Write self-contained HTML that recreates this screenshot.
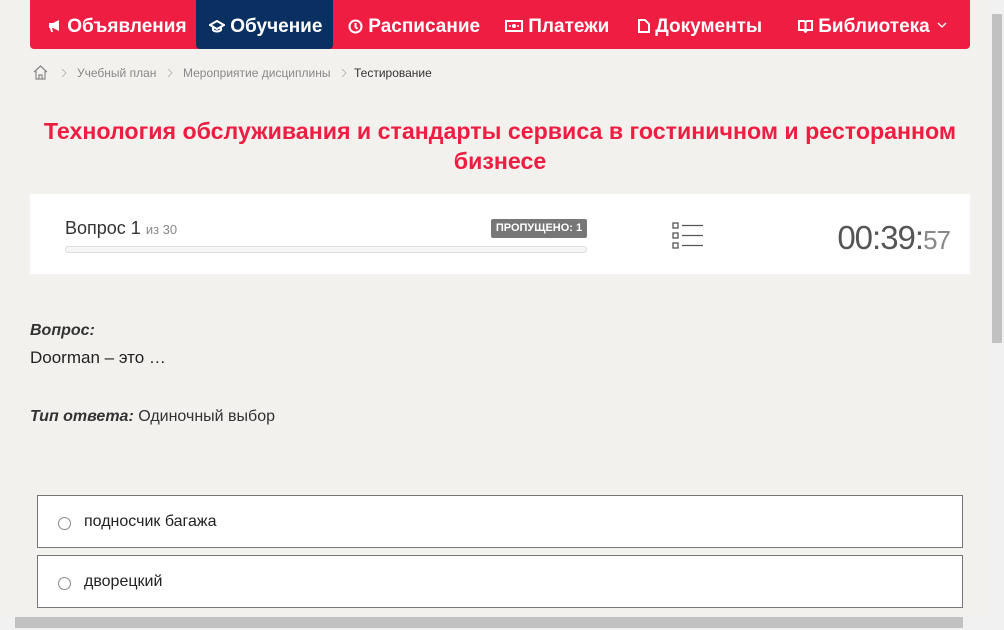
<!DOCTYPE html>
<html><head><meta charset="utf-8"><style>
*{box-sizing:border-box;margin:0;padding:0}
body{width:1004px;height:630px;overflow:hidden;background:#f2f1ee;font-family:"Liberation Sans","DejaVu Sans",sans-serif;position:relative;color:#222}
.nav{position:absolute;left:30px;top:0;width:940px;height:49px;background:#ee1d41;border-radius:0 0 4px 4px}
.it{position:absolute;top:0;height:49px;line-height:53px;color:#fff;font-size:19px;font-weight:bold;font-family:"Liberation Sans",sans-serif;white-space:nowrap}
.act{background:#0a3061;border-radius:0 0 4px 4px}
.bc{position:absolute;top:66px;font-size:12px;color:#888}
h1{position:absolute;left:18px;width:964px;top:116px;text-align:center;color:#ee1d41;font-size:23.2px;line-height:30px;font-weight:bold;font-family:"Liberation Sans",sans-serif}
.card{position:absolute;left:30px;top:194px;width:940px;height:80px;background:#fff}
.opt{position:absolute;left:37px;width:926px;height:53px;background:#fff;border:1px solid #777}
.opt span{position:absolute;left:46px;top:17px;font-size:16px;color:#222}
.opt i{position:absolute;left:20px;top:21px;width:13px;height:13px;border:1px solid #888;border-radius:50%}
</style></head><body>
<div class="nav">
<div class="it" style="left:18px">
<svg width="14" height="14" viewBox="0 0 14 14" style="vertical-align:-1px"><path d="M1 4h4l6-3v11l-6-3H4l1 4H3l-1-4H1z" fill="#fff"/></svg> Объявления</div>
<div class="it act" style="left:166px;width:137px;padding-left:13px">
<svg width="16" height="14" viewBox="0 0 16 14" style="vertical-align:-1px"><path d="M8 2L1 6l7 4 7-4z M4 8v3c2 2 6 2 8 0V8" fill="none" stroke="#fff" stroke-width="2"/></svg> Обучение</div>
<div class="it" style="left:318px">
<svg width="15" height="15" viewBox="0 0 15 15" style="vertical-align:-2px"><circle cx="7.5" cy="7.5" r="6" fill="none" stroke="#fff" stroke-width="2"/><path d="M7.5 4v4l2 2" fill="none" stroke="#fff" stroke-width="2"/></svg> Расписание</div>
<div class="it" style="left:475px">
<svg width="18" height="12" viewBox="0 0 18 12" style="vertical-align:0"><rect x="1" y="1" width="16" height="10" fill="none" stroke="#fff" stroke-width="2"/><circle cx="9" cy="6" r="2" fill="#fff"/><circle cx="5" cy="6" r="1" fill="#fff"/><circle cx="13" cy="6" r="1" fill="#fff"/></svg> Платежи</div>
<div class="it" style="left:608px">
<svg width="12" height="14" viewBox="0 0 12 14" style="vertical-align:-1px"><path d="M1 1h6l4 4v8H1z" fill="none" stroke="#fff" stroke-width="2"/></svg> Документы</div>
<div class="it" style="left:768px">
<svg width="15" height="13" viewBox="0 0 15 13" style="vertical-align:-1px"><path d="M1 1h5l1.5 1L9 1h5v9H9l-1.5 2L6 10H1z M7.5 2v10" fill="none" stroke="#fff" stroke-width="2"/></svg> Библиотека</div>
<svg style="position:absolute;left:907px;top:22px" width="10" height="7" viewBox="0 0 10 7"><path d="M1 1l4 4 4-4" fill="none" stroke="#fff" stroke-width="1.3"/></svg>
</div>
<svg style="position:absolute;left:33px;top:65px" width="15" height="15" viewBox="0 0 15 15"><path d="M1 7L7.5 1 14 7M3 6v8h9V6M6 14V10h3v4" fill="none" stroke="#888" stroke-width="1.2"/></svg>
<svg style="position:absolute;left:61px;top:68px" width="6" height="10" viewBox="0 0 6 10"><path d="M1 1l4 4-4 4" fill="none" stroke="#bbb"/></svg>
<div class="bc" style="left:77px">Учебный план</div>
<svg style="position:absolute;left:167px;top:68px" width="6" height="10" viewBox="0 0 6 10"><path d="M1 1l4 4-4 4" fill="none" stroke="#bbb"/></svg>
<div class="bc" style="left:183px">Мероприятие дисциплины</div>
<svg style="position:absolute;left:341px;top:68px" width="6" height="10" viewBox="0 0 6 10"><path d="M1 1l4 4-4 4" fill="none" stroke="#bbb"/></svg>
<div class="bc" style="left:354px;color:#333">Тестирование</div>
<h1>Технология обслуживания и стандарты сервиса в гостиничном и ресторанном бизнесе</h1>
<div class="card">
<div style="position:absolute;left:35px;top:24px;font-size:18px;color:#333">Вопрос 1 <span style="font-size:13px;color:#888">из 30</span></div>
<div style="position:absolute;left:461px;top:25px;width:96px;height:19px;background:#777;border-radius:2px;color:#fff;font-size:11px;font-weight:bold;text-align:center;line-height:19px">ПРОПУЩЕНО: 1</div>
<div style="position:absolute;left:35px;top:52px;width:522px;height:7px;border:1px solid #ddd;border-radius:4px;background:#f6f6f6"></div>
<svg style="position:absolute;left:642px;top:28px" width="32" height="28" viewBox="0 0 32 28"><g fill="none" stroke="#555" stroke-width="1.3"><rect x="1" y="1" width="5" height="5"/><rect x="1" y="11" width="5" height="5"/><rect x="1" y="21" width="5" height="5"/><path d="M10 3.5h21M10 13.5h21M10 23.5h21"/></g></svg>
<div style="position:absolute;right:20px;top:25px;font-size:33px;color:#555;letter-spacing:-1px">00:39:<span style="font-size:26px;color:#888">57</span></div>
</div>
<div style="position:absolute;left:30px;top:322px;font-size:16px;font-weight:bold;font-style:italic;color:#333">Вопрос:</div>
<div style="position:absolute;left:30px;top:348px;font-size:17px;color:#222">Doorman – это …</div>
<div style="position:absolute;left:30px;top:408px;font-size:16px;color:#333"><b><i>Тип ответа:</i></b> Одиночный выбор</div>
<div class="opt" style="top:495px"><i></i><span>подносчик багажа</span></div>
<div class="opt" style="top:555px"><i></i><span>дворецкий</span></div>
<div style="position:absolute;left:990px;top:0;width:14px;height:615px;background:#f1f1f1"></div>
<div style="position:absolute;left:992px;top:14px;width:10px;height:329px;background:#c1c1c1"></div>
<div style="position:absolute;left:0;top:615px;width:1004px;height:15px;background:#f1f1f1"></div>
<div style="position:absolute;left:15px;top:617px;width:948px;height:11px;background:#c1c1c1"></div>
</body></html>
